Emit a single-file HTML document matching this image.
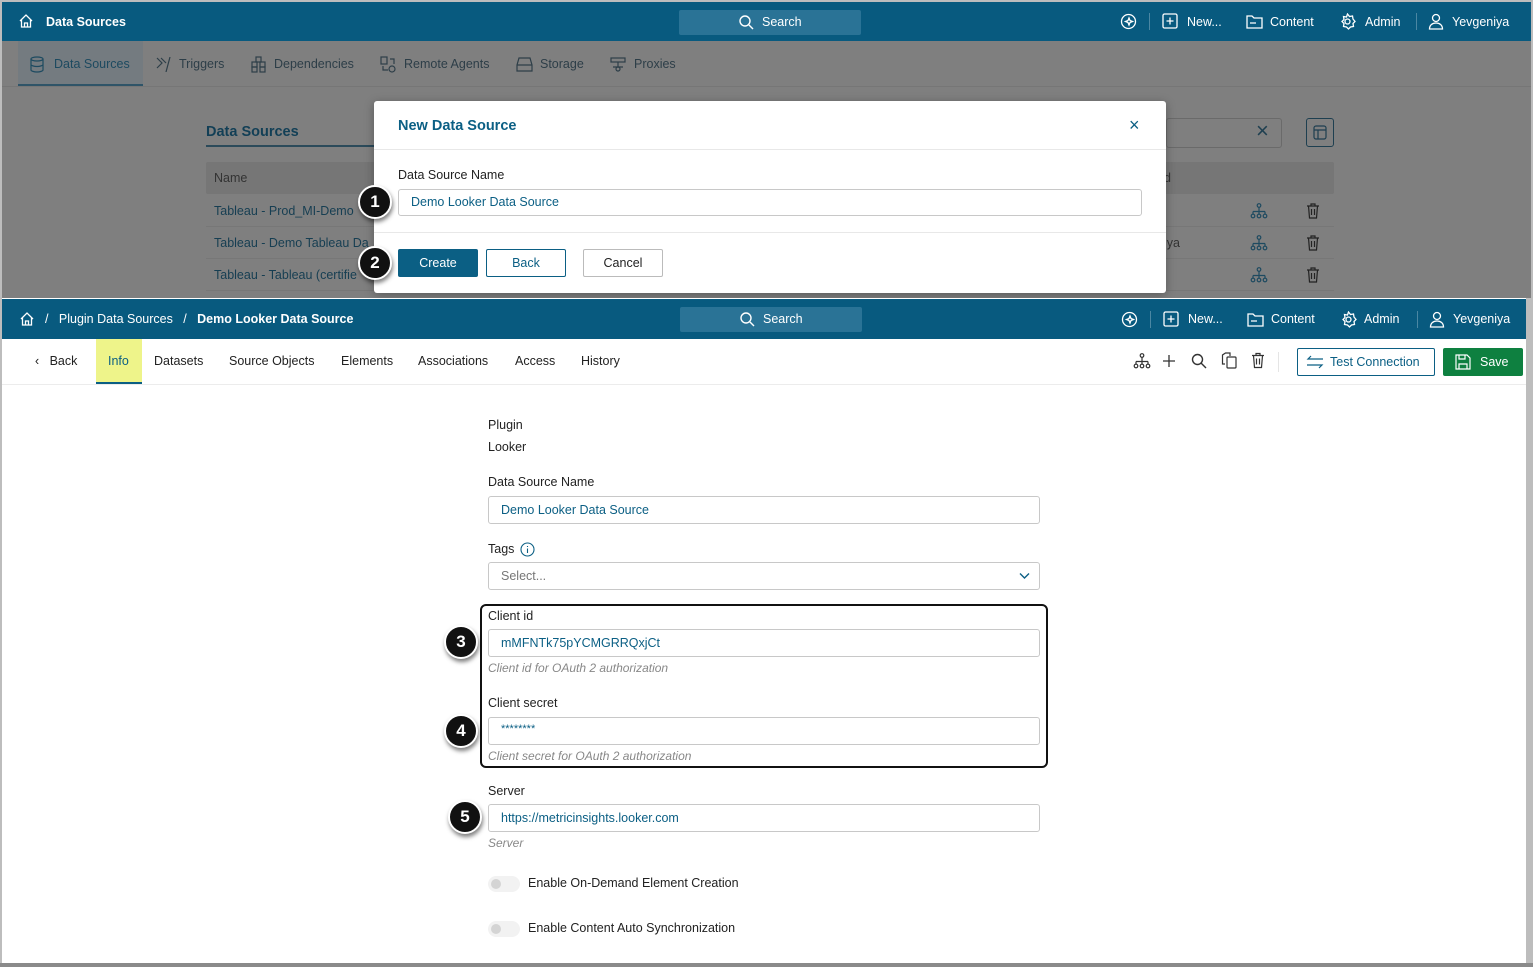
<!DOCTYPE html>
<html><head><meta charset="utf-8">
<style>
*{box-sizing:border-box;margin:0;padding:0}
body{width:1533px;height:967px;position:relative;overflow:hidden;background:#bdbdbd;font-family:"Liberation Sans",sans-serif;font-size:12.5px;color:#222}
.a{position:absolute}
.hdr{background:#085a7f;color:#fff;height:40px}
.hdr .t{position:absolute;top:13px;font-size:12.5px}
.srch{position:absolute;top:8px;width:182px;height:25px;background:#2a7396;border-radius:2px;color:#e8f0f4}
.dim{color:#2d3e48}
.inp{position:absolute;height:28px;border:1px solid #c8c8c8;border-radius:3px;background:#fff;color:#0b5f84;padding-left:12px;line-height:26px;font-size:12.5px}
.badge{position:absolute;width:34px;height:34px;border-radius:50%;background:#111;border:2px solid #fff;color:#fff;font-weight:bold;font-size:17px;text-align:center;line-height:30px;box-shadow:1px 3px 4px rgba(0,0,0,.5)}
.hint{position:absolute;color:#888;font-style:italic;font-size:12px}
.tog{position:absolute;width:32px;height:16px;border-radius:8px;background:#f2f2f2}
.tog:after{content:"";position:absolute;left:3px;top:3px;width:10px;height:10px;border-radius:50%;background:#d4d4d4}
</style></head><body>
<svg width="0" height="0" style="position:absolute"><defs>
<g id="hier" fill="none" stroke-width="1.2"><circle cx="9" cy="2.5" r="1.8"/><path d="M9 4.5v4M3 8.5h12M3 8.5v3M9 8.5v3M15 8.5v3"/><circle cx="3" cy="13" r="1.8"/><circle cx="9" cy="13" r="1.8"/><circle cx="15" cy="13" r="1.8"/></g>
<g id="trash" fill="none" stroke-width="1.2"><path d="M1 3h12M5 3V1h4v2M2.5 3l1 12h7l1-12M5.5 6v6M8.5 6v6"/></g>
</defs></svg>
<div class="a" style="left:2px;top:2px;width:1529px;height:296px;background:#7f7f7f;overflow:hidden">
  <div class="a hdr" style="left:0;top:0;width:1529px;height:39px">
    <svg class="a" style="left:16px;top:11px" width="16" height="16" viewBox="0 0 16 16" fill="none" stroke="#fff" stroke-width="1.3"><path d="M2 8L8 2l6 6M3.5 6.5V14h9V6.5M6.5 14v-4h3v4"/></svg>
    <div class="t" style="left:44px;font-weight:bold">Data Sources</div>
    <div class="srch" style="left:677px"><svg class="a" style="left:59px;top:4px" width="16" height="16" viewBox="0 0 16 16" fill="none" stroke="#fff" stroke-width="1.4"><circle cx="7" cy="7" r="5"/><path d="M11 11l4 4"/></svg><span class="a" style="left:83px;top:5px;color:#fff">Search</span></div>
    <svg class="a" style="left:1118px;top:11px" width="17" height="17" viewBox="0 0 17 17" fill="none" stroke="#fff" stroke-width="1.3"><circle cx="8.5" cy="8.5" r="7"/><path d="M9 5l1 2.5 2.5 1-2.5 1L9 12l-1-2.5-2.5-1 2.5-1z"/></svg>
    <div class="a" style="left:1147px;top:11px;width:1px;height:17px;background:#4b87a3"></div>
    <svg class="a" style="left:1160px;top:11px" width="16" height="16" viewBox="0 0 16 16" fill="none" stroke="#fff" stroke-width="1.3"><rect x="1" y="1" width="14" height="14" rx="1.5"/><path d="M8 4.5v7M4.5 8h7"/></svg>
    <div class="t" style="left:1185px">New...</div>
    <svg class="a" style="left:1244px;top:12px" width="17" height="15" viewBox="0 0 17 15" fill="none" stroke="#fff" stroke-width="1.3"><path d="M1 2h5l2 2h8v10H1z M4 9h6"/></svg>
    <div class="t" style="left:1268px">Content</div>
    <svg class="a" style="left:1337px;top:11px" width="17" height="17" viewBox="0 0 17 17" fill="none" stroke="#fff" stroke-width="1.3"><circle cx="8.5" cy="8.5" r="2.5"/><path d="M8.5 1l2 2.5 3-.5.5 3L16 8.5l-2 2 .5 3-3 .5-2 2-2-2-3-.5.5-3-2-2 2-2-.5-3 3 .5z"/></svg>
    <div class="t" style="left:1363px">Admin</div>
    <div class="a" style="left:1414px;top:11px;width:1px;height:17px;background:#4b87a3"></div>
    <svg class="a" style="left:1426px;top:11px" width="16" height="17" viewBox="0 0 16 17" fill="none" stroke="#fff" stroke-width="1.3"><circle cx="8" cy="5" r="3.5"/><path d="M1.5 16c0-4 3-6 6.5-6s6.5 2 6.5 6z"/></svg>
    <div class="t" style="left:1450px">Yevgeniya</div>
  </div>
  <div class="a" style="left:16px;top:39px;width:125px;height:45px;background:#747b80;border-bottom:2px solid #2f5468"></div>
  <div class="a dim" style="left:52px;top:55px;color:#1d4a60">Data Sources</div>
  <div class="a dim" style="left:177px;top:55px">Triggers</div>
  <div class="a dim" style="left:272px;top:55px">Dependencies</div>
  <div class="a dim" style="left:402px;top:55px">Remote Agents</div>
  <div class="a dim" style="left:538px;top:55px">Storage</div>
  <div class="a dim" style="left:632px;top:55px">Proxies</div>
  <svg class="a" style="left:28px;top:54px" width="14" height="17" viewBox="0 0 14 17" fill="none" stroke="#1d4a60" stroke-width="1.2"><ellipse cx="7" cy="3" rx="6" ry="2"/><path d="M1 3v11c0 1 3 2 6 2s6-1 6-2V3M1 8.5c0 1 3 2 6 2s6-1 6-2"/></svg>
  <svg class="a" style="left:154px;top:55px" width="16" height="15" viewBox="0 0 16 15" fill="none" stroke="#2d3e48" stroke-width="1.2"><path d="M1 1l5 5-5 5M5 1l5 5M14 0L10 15"/></svg>
  <svg class="a" style="left:248px;top:54px" width="17" height="17" viewBox="0 0 17 17" fill="none" stroke="#2d3e48" stroke-width="1.2"><rect x="6" y="1" width="5" height="5"/><rect x="2" y="6" width="5" height="5"/><rect x="10" y="6" width="5" height="5"/><rect x="2" y="11" width="5" height="5"/><rect x="10" y="11" width="5" height="5"/></svg>
  <svg class="a" style="left:378px;top:54px" width="17" height="17" viewBox="0 0 17 17" fill="none" stroke="#2d3e48" stroke-width="1.2"><rect x="1" y="1" width="6" height="7"/><circle cx="12" cy="13" r="3"/><path d="M10 3h4v5M3 10v4h5"/></svg>
  <svg class="a" style="left:514px;top:54px" width="17" height="17" viewBox="0 0 17 17" fill="none" stroke="#2d3e48" stroke-width="1.2"><path d="M3 2h11l2 7v6H1V9z M1 9h15"/></svg>
  <svg class="a" style="left:608px;top:55px" width="16" height="15" viewBox="0 0 16 15" fill="none" stroke="#2d3e48" stroke-width="1.2"><rect x="1" y="1" width="14" height="4"/><path d="M8 5v5M3 10h10"/><circle cx="8" cy="12" r="2"/></svg>
  <div class="a" style="left:0;top:84px;width:1529px;height:1px;background:#767676"></div>
  <div class="a" style="left:204px;top:122px;font-size:14.5px;font-weight:bold;color:#123f56">Data Sources</div>
  <div class="a" style="left:204px;top:143px;width:170px;height:2px;background:#2b4a5a"></div>
  <div class="a" style="left:204px;top:160px;width:1128px;height:32px;background:#767676;border-radius:2px"></div>
  <div class="a" style="left:212px;top:169px;color:#333">Name</div>
  <div class="a" style="left:1162px;top:169px;color:#333">d</div>
  <div class="a" style="left:212px;top:202px;color:#163e52">Tableau - Prod_MI-Demo</div>
  <div class="a" style="left:212px;top:234px;color:#163e52">Tableau - Demo Tableau Da</div>
  <div class="a" style="left:212px;top:266px;color:#163e52">Tableau - Tableau (certifie</div>
  <div class="a" style="left:1162px;top:234px;color:#333">iya</div>
  <div class="a" style="left:204px;top:224px;width:1128px;height:1px;background:#777"></div>
  <div class="a" style="left:204px;top:256px;width:1128px;height:1px;background:#777"></div>
  <div class="a" style="left:204px;top:288px;width:1128px;height:1px;background:#777"></div>
  <div class="a" style="left:1164px;top:116px;width:116px;height:30px;border:1px solid #6a6a6a;border-radius:3px"></div>
  <div class="a" style="left:1254px;top:116px;font-size:22px;color:#1e3f50">×</div>
  <div class="a" style="left:1304px;top:116px;width:28px;height:29px;border:1.5px solid #1e3f50;border-radius:3px"></div>
  <svg class="a" style="left:1311px;top:123px" width="14" height="15" viewBox="0 0 14 15" fill="none" stroke="#1e3f50" stroke-width="1.2"><rect x="1" y="1" width="12" height="13" rx="2"/><path d="M1 5h12M5 5v9"/></svg>
  <svg class="a" style="left:1248px;top:201px" width="18" height="16" viewBox="0 0 18 16" stroke="#1e4a60"><use href="#hier"/></svg>
  <svg class="a" style="left:1248px;top:233px" width="18" height="16" viewBox="0 0 18 16" stroke="#1e4a60"><use href="#hier"/></svg>
  <svg class="a" style="left:1248px;top:265px" width="18" height="16" viewBox="0 0 18 16" stroke="#1e4a60"><use href="#hier"/></svg>
  <svg class="a" style="left:1304px;top:201px" width="14" height="16" viewBox="0 0 14 16" stroke="#222"><use href="#trash"/></svg>
  <svg class="a" style="left:1304px;top:233px" width="14" height="16" viewBox="0 0 14 16" stroke="#222"><use href="#trash"/></svg>
  <svg class="a" style="left:1304px;top:265px" width="14" height="16" viewBox="0 0 14 16" stroke="#222"><use href="#trash"/></svg>
  <div class="a" style="left:372px;top:99px;width:792px;height:192px;background:#fff;border-radius:3px;box-shadow:0 2px 10px rgba(0,0,0,.3)">
    <div class="a" style="left:24px;top:17px;font-size:14.5px;font-weight:bold;color:#0b5f84">New Data Source</div>
    <div class="a" style="left:755px;top:14px;font-size:18px;color:#0b5f84">×</div>
    <div class="a" style="left:0;top:48px;width:792px;height:1px;background:#e8e8e8"></div>
    <div class="a" style="left:24px;top:67px;color:#222">Data Source Name</div>
    <div class="inp" style="left:24px;top:88px;width:744px;height:27px;line-height:25px">Demo Looker Data Source</div>
    <div class="a" style="left:0;top:131px;width:792px;height:1px;background:#e8e8e8"></div>
    <div class="a" style="left:24px;top:148px;width:80px;height:28px;background:#0b5f84;color:#fff;border-radius:2px;text-align:center;line-height:28px">Create</div>
    <div class="a" style="left:112px;top:148px;width:80px;height:28px;border:1px solid #0b5f84;color:#0b5f84;border-radius:2px;text-align:center;line-height:26px">Back</div>
    <div class="a" style="left:209px;top:148px;width:80px;height:28px;border:1px solid #bbb;color:#222;border-radius:2px;text-align:center;line-height:26px">Cancel</div>
  </div>
</div>
<div class="badge" style="left:358px;top:185px">1</div>
<div class="badge" style="left:358px;top:246px">2</div>
<div class="a" style="left:2px;top:298px;width:1524px;height:665px;background:#fff;overflow:hidden">
  <div class="a hdr" style="left:0;top:1px;width:1524px;height:40px">
    <svg class="a" style="left:17px;top:12px" width="16" height="16" viewBox="0 0 16 16" fill="none" stroke="#fff" stroke-width="1.3"><path d="M2 8L8 2l6 6M3.5 6.5V14h9V6.5M6.5 14v-4h3v4"/></svg>
    <div class="t" style="left:43px">/&nbsp;&nbsp;&nbsp;Plugin Data Sources&nbsp;&nbsp;&nbsp;/&nbsp;&nbsp;&nbsp;<b>Demo Looker Data Source</b></div>
    <div class="srch" style="left:678px"><svg class="a" style="left:59px;top:4px" width="16" height="16" viewBox="0 0 16 16" fill="none" stroke="#fff" stroke-width="1.4"><circle cx="7" cy="7" r="5"/><path d="M11 11l4 4"/></svg><span class="a" style="left:83px;top:5px;color:#fff">Search</span></div>
    <svg class="a" style="left:1119px;top:12px" width="17" height="17" viewBox="0 0 17 17" fill="none" stroke="#fff" stroke-width="1.3"><circle cx="8.5" cy="8.5" r="7"/><path d="M9 5l1 2.5 2.5 1-2.5 1L9 12l-1-2.5-2.5-1 2.5-1z"/></svg>
    <div class="a" style="left:1148px;top:12px;width:1px;height:17px;background:#4b87a3"></div>
    <svg class="a" style="left:1161px;top:12px" width="16" height="16" viewBox="0 0 16 16" fill="none" stroke="#fff" stroke-width="1.3"><rect x="1" y="1" width="14" height="14" rx="1.5"/><path d="M8 4.5v7M4.5 8h7"/></svg>
    <div class="t" style="left:1186px">New...</div>
    <svg class="a" style="left:1245px;top:13px" width="17" height="15" viewBox="0 0 17 15" fill="none" stroke="#fff" stroke-width="1.3"><path d="M1 2h5l2 2h8v10H1z M4 9h6"/></svg>
    <div class="t" style="left:1269px">Content</div>
    <svg class="a" style="left:1338px;top:12px" width="17" height="17" viewBox="0 0 17 17" fill="none" stroke="#fff" stroke-width="1.3"><circle cx="8.5" cy="8.5" r="2.5"/><path d="M8.5 1l2 2.5 3-.5.5 3L16 8.5l-2 2 .5 3-3 .5-2 2-2-2-3-.5.5-3-2-2 2-2-.5-3 3 .5z"/></svg>
    <div class="t" style="left:1362px">Admin</div>
    <div class="a" style="left:1415px;top:12px;width:1px;height:17px;background:#4b87a3"></div>
    <svg class="a" style="left:1427px;top:12px" width="16" height="17" viewBox="0 0 16 17" fill="none" stroke="#fff" stroke-width="1.3"><circle cx="8" cy="5" r="3.5"/><path d="M1.5 16c0-4 3-6 6.5-6s6.5 2 6.5 6z"/></svg>
    <div class="t" style="left:1451px">Yevgeniya</div>
  </div>
  <div class="a" style="left:94px;top:41px;width:46px;height:45px;background:#eef48a;border-bottom:2px solid #0b5f84"></div>
  <div class="a" style="left:33px;top:56px">‹&nbsp;&nbsp;&nbsp;Back</div>
  <div class="a" style="left:106px;top:56px;color:#0b5f84">Info</div>
  <div class="a" style="left:152px;top:56px">Datasets</div>
  <div class="a" style="left:227px;top:56px">Source Objects</div>
  <div class="a" style="left:339px;top:56px">Elements</div>
  <div class="a" style="left:416px;top:56px">Associations</div>
  <div class="a" style="left:513px;top:56px">Access</div>
  <div class="a" style="left:579px;top:56px">History</div>
  <div class="a" style="left:0;top:86px;width:1524px;height:1px;background:#ececec"></div>
  <svg class="a" style="left:1131px;top:55px" width="18" height="16" viewBox="0 0 18 16" stroke="#333"><use href="#hier"/></svg>
  <svg class="a" style="left:1160px;top:56px" width="14" height="14" viewBox="0 0 14 14" stroke="#333" stroke-width="1.3"><path d="M7 1v12M1 7h12"/></svg>
  <svg class="a" style="left:1189px;top:55px" width="16" height="16" viewBox="0 0 16 16" fill="none" stroke="#333" stroke-width="1.4"><circle cx="6.5" cy="6.5" r="5"/><path d="M10 10l5 5"/></svg>
  <svg class="a" style="left:1219px;top:54px" width="17" height="17" viewBox="0 0 17 17" fill="none" stroke="#333" stroke-width="1.2"><path d="M4 12H1.5V3l3-2H9v3"/><rect x="6" y="5" width="9" height="11" rx="1"/></svg>
  <svg class="a" style="left:1249px;top:54px" width="14" height="17" viewBox="0 0 14 16" stroke="#333"><use href="#trash"/></svg>
  <div class="a" style="left:1276px;top:54px;width:1px;height:20px;background:#e5e5e5"></div>
  <div class="a" style="left:1295px;top:50px;width:138px;height:28px;border:1px solid #0b5f84;border-radius:2px;color:#0b5f84;line-height:26px;padding-left:32px">Test Connection</div>
  <svg class="a" style="left:1304px;top:57px" width="18" height="14" viewBox="0 0 18 14" fill="none" stroke="#0b5f84" stroke-width="1.2"><path d="M17 4H2l3-3M1 10h15l-3 3"/></svg>
  <div class="a" style="left:1441px;top:50px;width:80px;height:28px;background:#0e8040;border-radius:2px;color:#fff;line-height:28px;padding-left:37px">Save</div>
  <svg class="a" style="left:1453px;top:56px" width="16" height="16" viewBox="0 0 16 16" fill="none" stroke="#fff" stroke-width="1.2"><path d="M1 1h11l3 3v11H1z M4 1v4h6V1M4 15v-5h8v5"/></svg>
  <div class="a" style="left:1524px;top:86px;width:1px;height:580px;background:#ddd"></div>

  <div class="a" style="left:486px;top:120px">Plugin</div>
  <div class="a" style="left:486px;top:142px">Looker</div>
  <div class="a" style="left:486px;top:177px">Data Source Name</div>
  <div class="inp" style="left:486px;top:198px;width:552px">Demo Looker Data Source</div>
  <div class="a" style="left:486px;top:244px">Tags</div>
  <svg class="a" style="left:518px;top:244px" width="15" height="15" viewBox="0 0 15 15" fill="none" stroke="#0b5f84" stroke-width="1.1"><circle cx="7.5" cy="7.5" r="6.5"/><path d="M7.5 6.5v4.5M7.5 4v1"/></svg>
  <div class="inp" style="left:486px;top:264px;width:552px;color:#777">Select...</div>
  <svg class="a" style="left:1017px;top:274px" width="11" height="8" viewBox="0 0 11 8" fill="none" stroke="#0b5f84" stroke-width="1.4"><path d="M1 1.5l4.5 4.5L10 1.5"/></svg>
  <div class="a" style="left:478px;top:306px;width:568px;height:164px;border:2px solid #111;border-radius:6px"></div>
  <div class="a" style="left:486px;top:311px">Client id</div>
  <div class="inp" style="left:486px;top:331px;width:552px">mMFNTk75pYCMGRRQxjCt</div>
  <div class="hint" style="left:486px;top:363px">Client id for OAuth 2 authorization</div>
  <div class="a" style="left:486px;top:398px">Client secret</div>
  <div class="inp" style="left:486px;top:419px;width:552px;font-size:11px;line-height:22px">********</div>
  <div class="hint" style="left:486px;top:451px">Client secret for OAuth 2 authorization</div>
  <div class="a" style="left:486px;top:486px">Server</div>
  <div class="inp" style="left:486px;top:506px;width:552px">https://metricinsights.looker.com</div>
  <div class="hint" style="left:486px;top:538px">Server</div>
  <div class="tog" style="left:486px;top:578px"></div>
  <div class="a" style="left:526px;top:578px">Enable On-Demand Element Creation</div>
  <div class="tog" style="left:486px;top:623px"></div>
  <div class="a" style="left:526px;top:623px">Enable Content Auto Synchronization</div>
</div>
<div class="badge" style="left:444px;top:625px">3</div>
<div class="badge" style="left:444px;top:714px">4</div>
<div class="badge" style="left:448px;top:800px">5</div>
<div class="a" style="left:0;top:963px;width:1533px;height:4px;background:#8a8a8a"></div>
</body></html>
